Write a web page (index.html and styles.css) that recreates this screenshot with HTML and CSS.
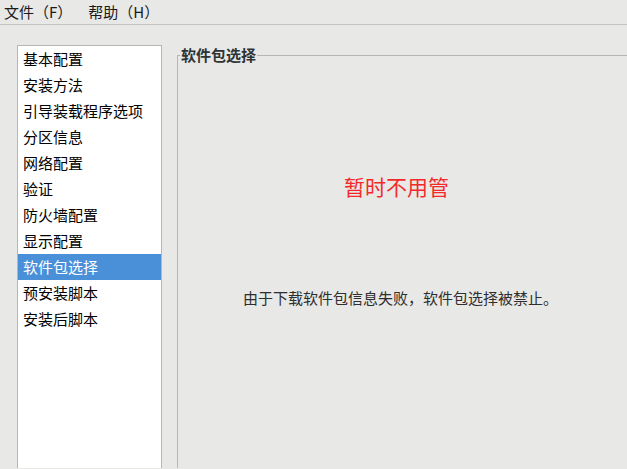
FILE: index.html
```html
<!DOCTYPE html>
<html lang="zh-CN">
<head>
  <meta charset="UTF-8">
  <title>安装配置</title>
  <link rel="stylesheet" href="styles.css">
</head>
<body>
  <div class="menubar">
    <span class="menu">文件（F）</span>
    <span class="menu">帮助（H）</span>
  </div>

  <div class="main">
    <ul class="sidebar">
      <li>基本配置</li>
      <li>安装方法</li>
      <li>引导装载程序选项</li>
      <li>分区信息</li>
      <li>网络配置</li>
      <li>验证</li>
      <li>防火墙配置</li>
      <li>显示配置</li>
      <li class="active">软件包选择</li>
      <li>预安装脚本</li>
      <li>安装后脚本</li>
    </ul>

    <fieldset class="group">
      <legend>软件包选择</legend>
      <div class="note">暂时不用管</div>
      <div class="message">由于下载软件包信息失败，软件包选择被禁止。</div>
    </fieldset>
  </div>
</body>
</html>
```

FILE: styles.css
```css
body {
  margin: 0;
  width: 627px;
  height: 469px;
  overflow: hidden;
  background-color: #e8e8e7;
  font-family: "Noto Sans CJK SC", "DejaVu Sans", sans-serif;
  font-size: 15px;
  color: #000;
}

.menubar {
  height: 24px;
  line-height: 24px;
  border-bottom: 1px solid #c4c4c3;
  padding-left: 4px;
  display: flex;
  gap: 16px;
}

.menu {
  color: #1a1a1a;
}

.main {
  display: flex;
  align-items: flex-start;
  height: 423px;
  padding: 20px 0 0 17px;
}

.sidebar {
  list-style: none;
  margin: 0;
  padding: 0;
  width: 145px;
  height: 423px;
  box-sizing: border-box;
  background-color: #fff;
  border: 1px solid #b6b6b5;
  border-bottom: none;
  flex-shrink: 0;
}

.sidebar li {
  height: 26px;
  line-height: 26px;
  padding-left: 5px;
  white-space: nowrap;
}

.sidebar li.active {
  background-color: #4a90d9;
  color: #fff;
}

.group {
  flex: 1;
  margin: 0 0 0 15px;
  padding: 0 8px 0 0;
  height: 423px;
  box-sizing: border-box;
  border: none;
  border-top: 1px solid #b6b6b5;
  border-left: 1px solid #b6b6b5;
  text-align: center;
}

.group legend {
  margin-left: 2px;
  padding: 0 1px 0 1px;
  font-weight: bold;
  font-size: 15px;
  line-height: 20px;
  color: #2e3436;
  text-align: left;
}

.note {
  margin-top: 107px;
  padding-right: 4px;
  font-size: 21px;
  line-height: 28px;
  color: #f42a2a;
}

.message {
  margin-top: 88px;
  padding-left: 4px;
  font-size: 15px;
  line-height: 20px;
  color: #2e2e2e;
}
```
